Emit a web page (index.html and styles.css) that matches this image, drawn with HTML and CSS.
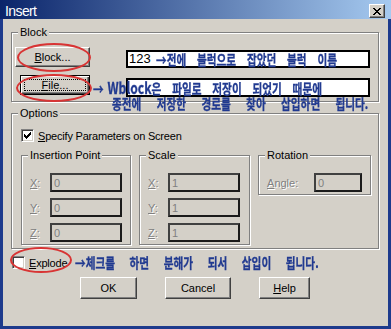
FILE: index.html
```html
<!DOCTYPE html>
<html>
	<head>
		<meta charset="UTF-8">
		<title>Insert</title>
		<meta name="viewport" content="width=device-width, initial-scale=1.0">

		<link rel="stylesheet" href="styles.css">
	</head>
	<body>

		<div class="window">
			<div class="titlebar">
				<span class="title">Insert</span>
				<span class="close">
					<svg width="8" height="7" viewBox="0 0 8 7"><path d="M0 0h2v1h-2z M6 0h2v1h-2z M1 1h2v1h-2z M5 1h2v1h-2z M2 2h4v1h-4z M3 3h2v1h-2z M2 4h4v1h-4z M1 5h2v1h-2z M5 5h2v1h-2z M0 6h2v1h-2z M6 6h2v1h-2z" fill="#000"/></svg>
				</span>
			</div>

			<div class="frame">
				<!-- Block -->
				<fieldset class="group">
					<legend>Block</legend>
					<div class="block-body">
						<button class="btn btn-block"><u>B</u>lock...</button>
						<button class="btn btn-default btn-file"><u>F</u>ile...</button>
					</div>
				</fieldset>

				<!-- Options -->
				<fieldset class="group options">
					<legend>Options</legend>
					<div class="options-body">
						<label class="check">
							<span class="box">
								<svg width="7" height="7" viewBox="0 0 7 7"><path d="M6 0h1v1h-1z M5 1h2v1h-2z M0 2h1v1h-1z M4 2h3v1h-3z M0 3h2v1h-2z M3 3h3v1h-3z M0 4h5v1h-5z M1 5h3v1h-3z M2 6h1v1h-1z" fill="#000"/></svg>
							</span>
							<span class="check-text"><u>S</u>pecify Parameters on Screen</span>
						</label>

						<div class="subgroups">
							<fieldset class="group sub sub-insert">
								<legend>Insertion Point</legend>
								<div class="rows">
									<div class="field"><span class="lbl"><u>X</u>:</span><input class="inp" type="text" value="0" disabled></div>
									<div class="field"><span class="lbl"><u>Y</u>:</span><input class="inp" type="text" value="0" disabled></div>
									<div class="field"><span class="lbl"><u>Z</u>:</span><input class="inp" type="text" value="0" disabled></div>
								</div>
							</fieldset>
							<fieldset class="group sub sub-scale">
								<legend>Scale</legend>
								<div class="rows">
									<div class="field"><span class="lbl"><u>X</u>:</span><input class="inp" type="text" value="1" disabled></div>
									<div class="field"><span class="lbl"><u>Y</u>:</span><input class="inp" type="text" value="1" disabled></div>
									<div class="field"><span class="lbl"><u>Z</u>:</span><input class="inp" type="text" value="1" disabled></div>
								</div>
							</fieldset>
							<fieldset class="group sub sub-rotation">
								<legend>Rotation</legend>
								<div class="rows">
									<div class="field"><span class="lbl lbl-angle"><u>A</u>ngle:</span><input class="inp inp-angle" type="text" value="0" disabled></div>
								</div>
							</fieldset>
						</div>
					</div>
				</fieldset>

				<label class="check explode">
					<span class="box"></span>
					<span class="check-text"><u>E</u>xplode</span>
				</label>

				<div class="actions">
					<button class="btn btn-ok">OK</button>
					<button class="btn btn-cancel">Cancel</button>
					<button class="btn btn-help"><u>H</u>elp</button>
				</div>
			</div>

			<!-- 메모 -->
			<div class="notes">
				<span class="ring ring-block"></span>
				<span class="ring ring-file"></span>
				<span class="ring ring-explode"></span>

				<div class="memo memo-1">
					<span class="memo-num">123</span>
					<span class="note note-in">→전에 블럭으로 잡았던 블럭 이름</span>
				</div>
				<div class="memo memo-2"></div>

				<span class="note note-2">→<span class="note-latin">Wblock</span>은 파일로 저장이 되었기 때문에</span>
				<span class="note note-3">종전에 저장한 경로를 찾아 삽입하면 됩니다.</span>
				<span class="note note-4">→체크를 하면 분해가 되서 삽입이 됩니다.</span>
			</div>
		</div>

	</body>
</html>
```

FILE: styles.css
```css
*{
	margin: 0;
	padding: 0;
}
body{
	font-family: "Liberation Sans", Arial, sans-serif;
	font-size: 11px;
	color: #000;
}
.window{
	width: 391px;
	height: 329px;
	position: relative;
	overflow: hidden;
	background: #d4d0c8;
}

/* title */
.titlebar{
	height: 19px;
	display: flex;
	justify-content: space-between;
	align-items: flex-start;
	padding: 0 6px 0 5px;
	background: linear-gradient(to right, #0a246a, #a6caf0);
}
.titlebar .title{
	margin-top: 4px;
	color: #fff;
	font-size: 14px;
	line-height: 14px;
	letter-spacing: -0.6px;
}
.titlebar .close{
	margin-top: 4px;
	width: 16px;
	height: 14px;
	box-sizing: border-box;
	display: flex;
	align-items: center;
	justify-content: center;
	background: #d4d0c8;
	border: 1px solid;
	border-color: #fff #404040 #404040 #fff;
	box-shadow: inset -1px -1px 0 #808080;
}

.frame{
	height: 310px;
	box-sizing: border-box;
	padding: 7px 9px 0 8px;
	border: 3px solid #1d3a8c;
	border-top: 0;
}

/* group boxes */
.group{
	border: 1px solid #808080;
	box-shadow: 1px 1px 0 #fff, inset 1px 1px 0 #fff;
	min-inline-size: 0;
}
.group legend{
	margin-left: 6px;
	padding: 0 2px;
	line-height: 13px;
	background: #d4d0c8;
}
.block-body{
	display: flex;
	flex-direction: column;
	align-items: flex-start;
	gap: 8px;
	padding: 8px 0 6px 0;
}
.options{
	margin-top: 5px;
}
.options-body{
	padding: 9px 7px 3px 9px;
}

/* buttons */
.btn{
	height: 20px;
	box-sizing: border-box;
	font-family: "Liberation Sans", Arial, sans-serif;
	font-size: 11px;
	color: #000;
	background: #d4d0c8;
	border: 1px solid;
	border-color: #fff #404040 #404040 #fff;
	box-shadow: inset -1px -1px 0 #808080;
	position: relative;
}
.btn-block{
	margin-left: 3px;
	width: 75px;
}
.btn-file{
	margin-left: 8px;
	width: 70px;
}
.btn-default{
	border-color: #000;
	box-shadow: inset 1px 1px 0 #fff, inset -1px -1px 0 #404040, inset -2px -2px 0 #808080;
}
.btn-default::after{
	content: "";
	position: absolute;
	top: 3px;
	left: 3px;
	right: 3px;
	bottom: 3px;
	border: 1px dotted #000;
}

/* check boxes */
.check{
	display: flex;
	align-items: center;
	gap: 4px;
	height: 13px;
}
.check .box{
	width: 13px;
	height: 13px;
	box-sizing: border-box;
	display: flex;
	align-items: center;
	justify-content: center;
	background: #fff;
	border: 1px solid;
	border-color: #808080 #fff #fff #808080;
	box-shadow: inset 1px 1px 0 #404040, inset -1px -1px 0 #d4d0c8;
}
.check-text{
	letter-spacing: -0.2px;
}

/* sub groups */
.subgroups{
	display: flex;
	align-items: flex-start;
	gap: 8px;
	margin-top: 7px;
}
.sub-insert{
	width: 110px;
}
.sub-scale{
	width: 111px;
}
.sub-rotation{
	width: 113px;
}
.rows{
	display: flex;
	flex-direction: column;
	gap: 6px;
	padding: 11px 0 2px 8px;
}
.field{
	display: flex;
	align-items: center;
	height: 19px;
}
.lbl{
	width: 20px;
	color: #808080;
	text-shadow: 1px 1px 0 #fff;
}
.lbl-angle{
	width: 47px;
}
.inp{
	width: 72px;
	height: 19px;
	box-sizing: border-box;
	padding: 0 2px;
	font-family: "Liberation Sans", Arial, sans-serif;
	font-size: 11px;
	color: #808080;
	background: #d4d0c8;
	border: 2px solid;
	border-color: #404040 #1a1a1a #1a1a1a #404040;
	outline: none;
}
.inp-angle{
	width: 48px;
}

.explode{
	margin: 7px 0 0 1px;
}
.actions{
	display: flex;
	justify-content: center;
	gap: 28px;
	margin-top: 8px;
}
.actions .btn{
	height: 22px;
}
.btn-ok{
	width: 57px;
}
.btn-cancel{
	width: 66px;
}
.btn-help{
	width: 51px;
}

/* 메모 (화면 위에 그려진 주석) */
.notes{
	position: absolute;
	top: 0;
	left: 0;
	right: 0;
	bottom: 0;
	pointer-events: none;
}
.ring{
	position: absolute;
	box-sizing: border-box;
	border: 2px solid #d83434;
	border-radius: 50%;
}
.ring-block{
	left: 17px;
	top: 43px;
	width: 74px;
	height: 29px;
}
.ring-file{
	left: 16px;
	top: 74px;
	width: 76px;
	height: 28px;
}
.ring-explode{
	left: 10px;
	top: 247px;
	width: 62px;
	height: 26px;
}
.memo{
	position: absolute;
	left: 126px;
	width: 244px;
	box-sizing: border-box;
	background: #fff;
	border: 2px solid #000;
}
.memo-1{
	top: 50px;
	height: 18px;
	display: flex;
	align-items: center;
	padding-left: 1px;
}
.memo-2{
	top: 78px;
	height: 19px;
}
.memo-num{
	font-size: 13px;
	line-height: 14px;
}
.note{
	font-family: "Noto Sans CJK KR", sans-serif;
	font-weight: bold;
	font-size: 14px;
	line-height: 14px;
	color: #213a90;
	-webkit-text-stroke: 0.3px #213a90;
	white-space: nowrap;
	word-spacing: 11px;
	transform: scaleX(0.76);
	transform-origin: left center;
}
.note-in{
	display: inline-block;
	margin-left: 5px;
}
.note-2,
.note-3,
.note-4{
	position: absolute;
}
.note-2{
	left: 93px;
	top: 80px;
}
.note-3{
	left: 112px;
	top: 96px;
	word-spacing: 17px;
}
.note-4{
	left: 75px;
	top: 255px;
	word-spacing: 16px;
}
.note-latin{
	margin-left: 5px;
	font-size: 16px;
	word-spacing: 0;
}
```
